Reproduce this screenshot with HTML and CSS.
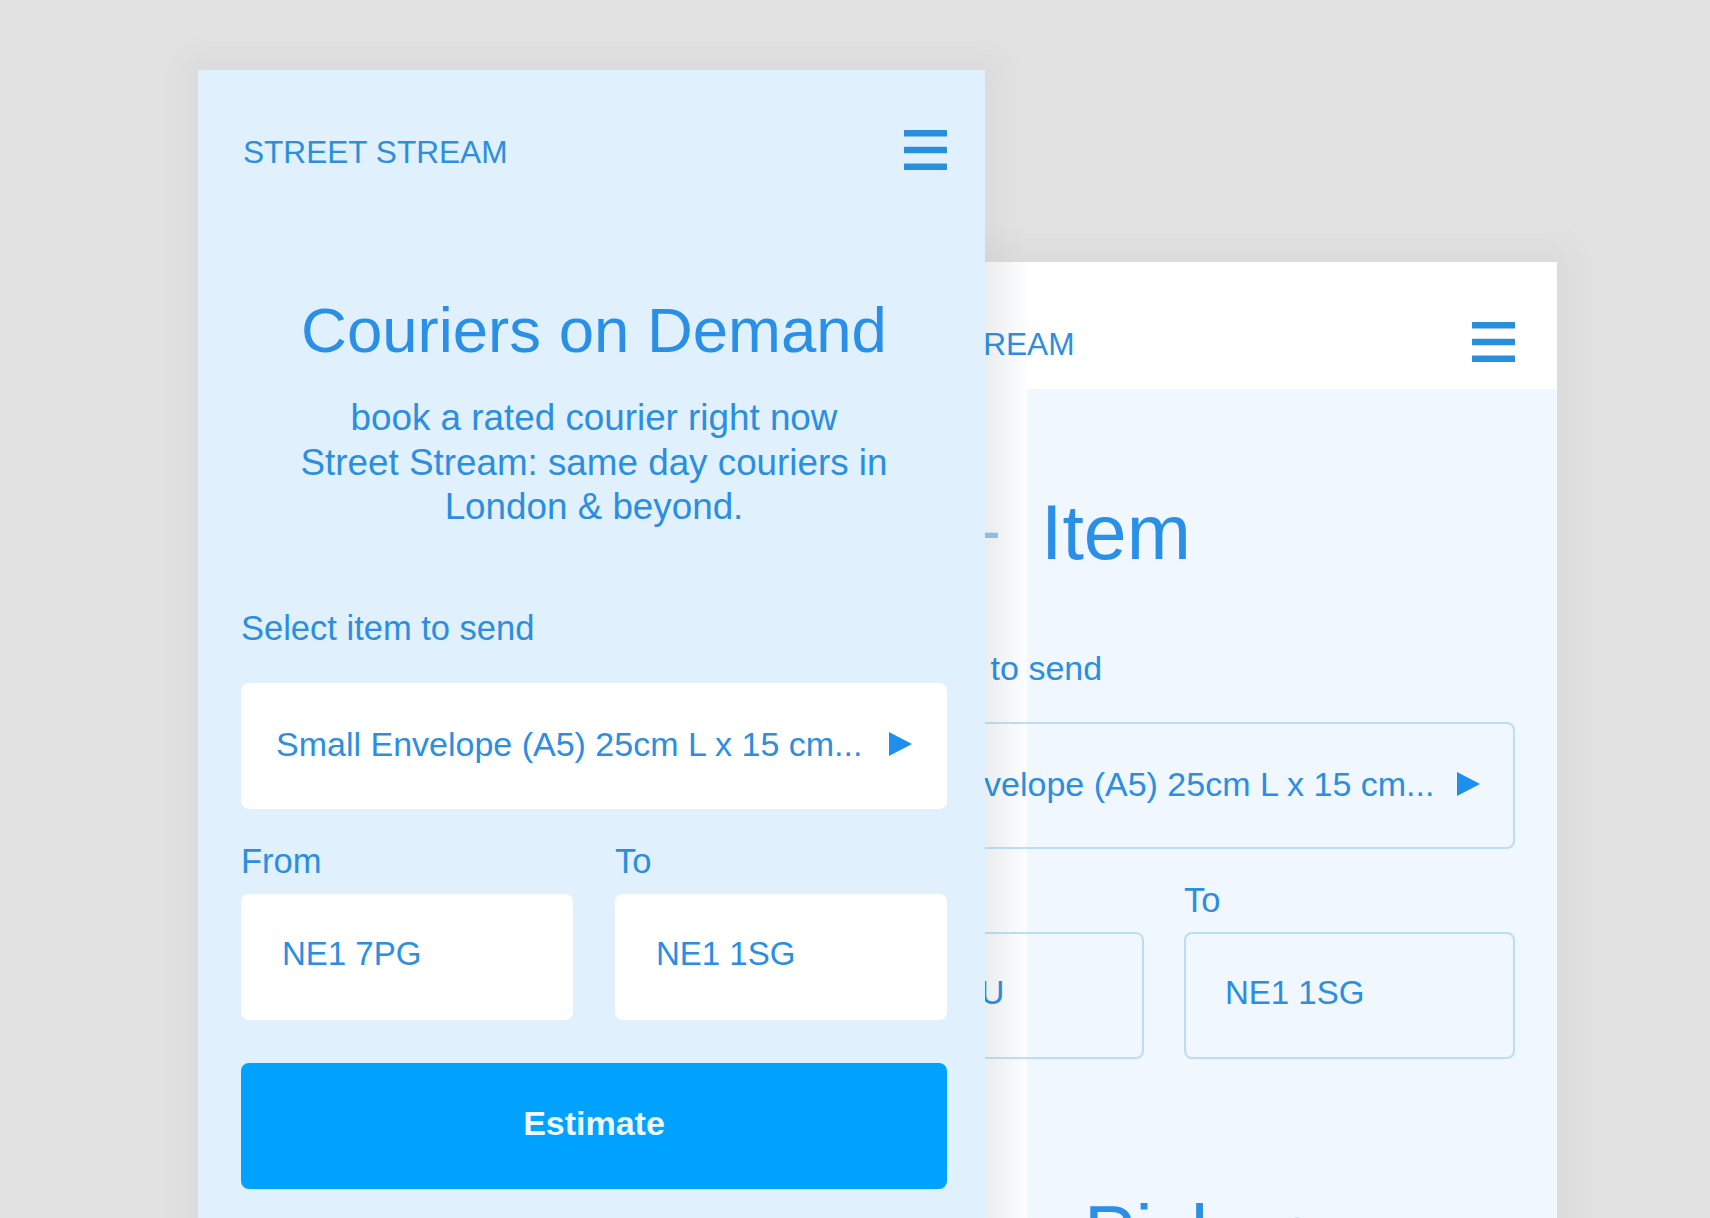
FILE: index.html
```html
<!DOCTYPE html>
<html lang="en">
<head>
<meta charset="utf-8">
<title>Street Stream — Couriers on Demand</title>
<link rel="stylesheet" href="styles.css">
</head>
<body>
<main class="canvas">
  <section class="screen screen-back" aria-label="Item details screen">
    <header class="app-bar">
      <span class="brand">STREET STREAM</span>
      <svg class="menu-icon" viewBox="0 0 43 40" aria-hidden="true"><rect x="0" y="0" width="43" height="6.5" rx="0.6"/><rect x="0" y="16.75" width="43" height="6.5" rx="0.6"/><rect x="0" y="33.5" width="43" height="6.5" rx="0.6"/></svg>
    </header>
    <h2 class="step-title"><span class="step-num">1 –</span>Item</h2>
    <p class="field-label step-label">Select item to send</p>
    <div class="select select-outline">
      <span class="select-text">Small Envelope (A5) 25cm L x 15 cm...</span>
      <svg class="select-caret" viewBox="0 0 23 24" aria-hidden="true"><path d="M0 0 L23 12 L0 24 Z"/></svg>
    </div>
    <div class="route route-back">
      <div class="route-field">
        <p class="field-label">From</p>
        <div class="input input-outline">NW1 2QU</div>
      </div>
      <div class="route-field">
        <p class="field-label">To</p>
        <div class="input input-outline">NE1 1SG</div>
      </div>
    </div>
    <h2 class="step-title step-title-pickup"><span class="step-num">2 –</span>Pickup</h2>
  </section>

  <section class="screen screen-front" aria-label="Home screen">
    <header class="app-bar">
      <span class="brand">STREET STREAM</span>
      <svg class="menu-icon" viewBox="0 0 43 40" aria-hidden="true"><rect x="0" y="0" width="43" height="6.5" rx="0.6"/><rect x="0" y="16.75" width="43" height="6.5" rx="0.6"/><rect x="0" y="33.5" width="43" height="6.5" rx="0.6"/></svg>
    </header>
    <div class="hero">
      <h1 class="hero-title">Couriers on Demand</h1>
      <p class="hero-text">book a rated courier right now<br>Street Stream: same day couriers in London &amp; beyond.</p>
    </div>
    <form class="quote">
      <p class="field-label">Select item to send</p>
      <div class="select">
        <span class="select-text">Small Envelope (A5) 25cm L x 15 cm...</span>
        <svg class="select-caret" viewBox="0 0 23 24" aria-hidden="true"><path d="M0 0 L23 12 L0 24 Z"/></svg>
      </div>
      <div class="route">
        <div class="route-field">
          <p class="field-label">From</p>
          <div class="input">NE1 7PG</div>
        </div>
        <div class="route-field">
          <p class="field-label">To</p>
          <div class="input">NE1 1SG</div>
        </div>
      </div>
      <button type="button" class="estimate">Estimate</button>
    </form>
  </section>
</main>
</body>
</html>
```

FILE: styles.css
```css
* {
  box-sizing: border-box;
  margin: 0;
  padding: 0;
}

html,
body {
  width: 1710px;
  height: 1218px;
}

body {
  background: #e2e2e2;
  font-family: "Liberation Sans", Arial, Helvetica, sans-serif;
  color: #2b8ee0;
  overflow: hidden;
}

.canvas {
  position: relative;
  width: 1710px;
  height: 1218px;
  overflow: hidden;
}

/* phone screens placed on the canvas */
.screen {
  position: absolute;
  width: 787px;
  height: 1320px;
  box-shadow: 0 0 30px 18px rgba(0, 0, 0, 0.032);
}

.screen-front {
  left: 198px;
  top: 70px;
  padding: 0 38px 0 43px;
  background: #e0f0fd;
}

.screen-back {
  left: 770px;
  top: 262px;
  padding: 0 42px 0 43px;
  background:
    linear-gradient(90deg, #f1f3f5, #fcfdfe) 215px 0 / 42px 100% no-repeat,
    linear-gradient(#ffffff, #ffffff) 0 0 / 100% 127px no-repeat,
    #f0f7ff;
}

/* app bar */
.app-bar {
  height: 127px;
  padding-top: 32px;
  display: flex;
  align-items: center;
  justify-content: space-between;
}

.brand {
  font-size: 31.6px;
  line-height: 36px;
  padding-top: 4px;
  padding-left: 2px;
  color: #2d8fdc;
}

.screen-back .brand {
  padding-left: 0;
  margin-left: -3px;
}

.menu-icon {
  display: block;
  width: 43px;
  height: 40px;
  fill: #2a8fdb;
}

/* hero */
.hero {
  text-align: center;
}

.hero-title {
  margin-top: 95px;
  font-size: 63.5px;
  line-height: 76px;
  font-weight: 400;
  color: #2a8fe6;
}

.hero-text {
  max-width: 650px;
  margin: 28px auto 0;
  font-size: 36.8px;
  line-height: 44.5px;
}

/* form */
.quote {
  margin-top: 78px;
}

.field-label {
  font-size: 34.5px;
  line-height: 40px;
}

.select {
  margin-top: 35.5px;
  height: 126px;
  display: flex;
  align-items: center;
  justify-content: space-between;
  padding: 0 35px 4px 35px;
  background: #ffffff;
  border-radius: 8px;
  font-size: 34px;
  line-height: 40px;
  white-space: nowrap;
}

.select-caret {
  display: block;
  width: 23px;
  height: 24px;
  fill: #1f8fef;
}

.route {
  display: grid;
  grid-template-columns: 1fr 1fr;
  column-gap: 42px;
  margin-top: 32px;
}

.input {
  margin-top: 13px;
  height: 126px;
  display: flex;
  align-items: center;
  padding: 0 0 6px 41px;
  background: #ffffff;
  border-radius: 8px;
  font-size: 33px;
  line-height: 40px;
  white-space: nowrap;
}

.estimate {
  display: block;
  width: 100%;
  height: 126px;
  margin-top: 43px;
  padding-bottom: 6px;
  border: 0;
  border-radius: 8px;
  background: #00a2ff;
  color: #eef8ff;
  font: 700 34px/40px "Liberation Sans", Arial, Helvetica, sans-serif;
}

/* back screen */
.step-title {
  margin-top: 100.6px;
  padding-left: 78px;
  font-size: 77px;
  line-height: 84px;
  font-weight: 400;
  color: #2a8fe6;
  white-space: nowrap;
}

.step-num {
  margin-right: 43px;
  line-height: 70px;
  vertical-align: 4px;
  color: #8fc3ee;
}

.step-title-pickup {
  margin-top: 132px;
  padding-left: 121px;
}

.step-label {
  margin-top: 74.6px;
  font-size: 34px;
}

.select-outline {
  margin-top: 34px;
  height: 127px;
  background: transparent;
  border: 2px solid #bddcf6;
  padding-left: 33px;
  padding-right: 33px;
}

.route-back {
  column-gap: 40px;
  margin-top: 31px;
}

.input-outline {
  margin-top: 12px;
  height: 127px;
  background: transparent;
  border: 2px solid #bddcf6;
  padding-left: 39px;
}
```
